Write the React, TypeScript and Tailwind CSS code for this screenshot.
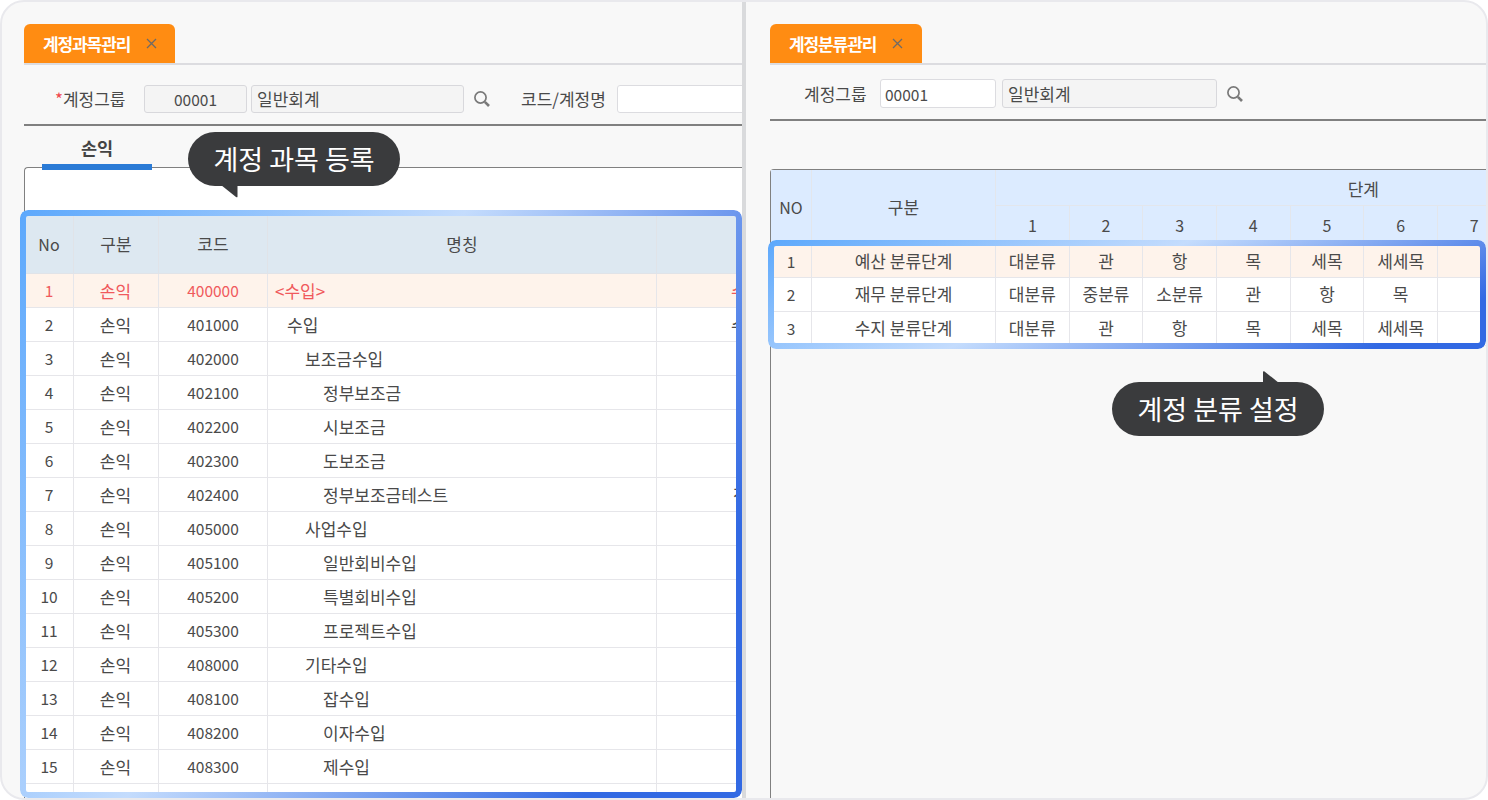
const font = "font-['Noto_Sans_CJK_KR','Noto_Sans',sans-serif]";

const rows: [number, string, string, number, string, string][] = [
  [1, "손익", "400000", 275, "<수입>", "수"],
  [2, "손익", "401000", 287, "수입", "수"],
  [3, "손익", "402000", 305, "보조금수입", ""],
  [4, "손익", "402100", 323, "정부보조금", ""],
  [5, "손익", "402200", 323, "시보조금", ""],
  [6, "손익", "402300", 323, "도보조금", ""],
  [7, "손익", "402400", 323, "정부보조금테스트", "정"],
  [8, "손익", "405000", 305, "사업수입", ""],
  [9, "손익", "405100", 323, "일반회비수입", ""],
  [10, "손익", "405200", 323, "특별회비수입", ""],
  [11, "손익", "405300", 323, "프로젝트수입", ""],
  [12, "손익", "408000", 305, "기타수입", ""],
  [13, "손익", "408100", 323, "잡수입", ""],
  [14, "손익", "408200", 323, "이자수입", ""],
  [15, "손익", "408300", 323, "제수입", ""],
];

const steps = [
  ["예산 분류단계", "대분류", "관", "항", "목", "세목", "세세목"],
  ["재무 분류단계", "대분류", "중분류", "소분류", "관", "항", "목"],
  ["수지 분류단계", "대분류", "관", "항", "목", "세목", "세세목"],
];

function Tab({ label, wide }: { label: string; wide?: boolean }) {
  return (
    <div className={`flex h-[39px] items-center rounded-t-md bg-[#ff8c12] pl-[19px] text-[17px] font-bold tracking-[-1.1px] text-white ${wide ? "w-[152px]" : "w-[151px]"}`}>
      <span>{label}</span>
      <svg className="ml-[16px]" width="11" height="11" viewBox="0 0 11 11">
        <path d="M1 1 10 10M10 1 1 10" stroke="#6f6a66" strokeWidth="1.3" fill="none" />
      </svg>
    </div>
  );
}

function SearchIcon() {
  return (
    <svg width="18" height="18" viewBox="0 0 18 18" fill="none">
      <circle cx="7.5" cy="7.5" r="5.6" stroke="#7a7a7a" strokeWidth="1.7" />
      <path d="M11.8 11.8 16 16" stroke="#7a7a7a" strokeWidth="2.6" />
    </svg>
  );
}

function Bubble({ text, className, children }: { text: string; className: string; children: React.ReactNode }) {
  return (
    <div className={`absolute flex h-[54px] w-[212px] items-center justify-center rounded-[27px] bg-[#3a3b3d] text-[27px] text-white ${className}`}>
      {text}
      {children}
    </div>
  );
}

function Frame({ className }: { className: string }) {
  return (
    <div
      className={`pointer-events-none absolute rounded-[8px] border-[6px] border-transparent [mask-image:linear-gradient(#000_0_0),linear-gradient(#000_0_0)] [mask-clip:padding-box,border-box] [mask-composite:exclude] ${className}`}
    />
  );
}

export default function App() {
  return (
    <div className={`relative h-[800px] w-[1488px] overflow-hidden bg-white text-[17px] text-[#4a4a4a] ${font}`}>
      <div className="flex h-full w-full overflow-hidden rounded-[24px] border-2 border-[#e9e9ed] bg-[#f8f8f8]">
        {/* left panel */}
        <div className="flex h-full w-[740px] shrink-0 flex-col overflow-hidden pl-[22px] pt-[22px]">
          <div className="border-b-2 border-[#dcdce0]">
            <Tab label="계정과목관리" />
          </div>
          <div className="mt-[20px] flex h-[28px] items-center">
            <span className="ml-[31px] w-[89px] shrink-0 whitespace-nowrap">
              <span className="text-[#f0484e]">*</span>계정그룹
            </span>
            <div className="flex h-[28px] w-[103px] shrink-0 items-center justify-center rounded-[3px] border border-[#d8d8dc] bg-[#f4f4f4] pt-[2px] text-[15.5px]">00001</div>
            <div className="ml-[4px] flex h-[28px] w-[213px] shrink-0 items-center rounded-[3px] border border-[#d8d8dc] bg-[#f4f4f4] pl-[5px]">일반회계</div>
            <div className="ml-[9px] shrink-0"><SearchIcon /></div>
            <span className="ml-[30px] shrink-0 whitespace-nowrap">코드/계정명</span>
            <div className="ml-[11px] h-[28px] w-[140px] shrink-0 rounded-[3px] border border-[#dcdce0] bg-white" />
          </div>
          <div className="mt-[11px] h-[2px] bg-[#808080]" />
          <div className="relative z-10 ml-[18px] flex h-[44px] w-[110px] items-center justify-center border-b-[6px] border-[#2b7bd6] pt-[6px] text-[17.5px] font-bold text-[#444]">
            손익
          </div>
          <div className="-mt-[3px] min-h-0 flex-1 rounded-tl-[4px] border-l border-t border-[#808080] bg-white pt-[48px]">
            <div className="grid h-[58px] grid-cols-[49px_85px_109px_389px_120px] border-b border-[#e0e3e8] bg-[#dde8f1]">
              {["No", "구분", "코드", "명칭", ""].map((h, i) => (
                <div key={i} className={`flex items-center justify-center border-r border-[#e0e3e8] pb-[2px] ${i === 0 ? "text-[16px]" : ""}`}>{h}</div>
              ))}
            </div>
            {rows.map(([n, kind, code, x, name, extra]) => {
              const red = n === 1;
              return (
                <div
                  key={n}
                  className={`grid h-[34px] grid-cols-[49px_85px_109px_389px_120px] border-b border-[#e6e6ea] ${red ? "bg-[#fef3eb] text-[#f0595c]" : ""}`}
                >
                  <div className="flex items-center justify-center border-r border-[#e6e6ea] pt-[1px] text-[15.5px]">{n}</div>
                  <div className="flex items-center justify-center border-r border-[#e6e6ea] pr-[1px]">{kind}</div>
                  <div className="flex items-center justify-center border-r border-[#e6e6ea] pt-[1px] text-[15.5px]">{code}</div>
                  <div className="flex items-center border-r border-[#e6e6ea]" style={{ paddingLeft: x - 268 }}>{name}</div>
                  <div className={`flex items-center whitespace-nowrap ${n === 7 ? "pl-[76px]" : "pl-[74px]"}`}>{extra}</div>
                </div>
              );
            })}
            <div className="grid h-[34px] grid-cols-[49px_85px_109px_389px_120px]">
              <div className="border-r border-[#e6e6ea]" />
              <div className="border-r border-[#e6e6ea]" />
              <div className="border-r border-[#e6e6ea]" />
              <div className="border-r border-[#e6e6ea]" />
              <div />
            </div>
          </div>
        </div>

        <div className="h-full w-[4px] shrink-0 bg-[#d9dadc]" />

        {/* right panel */}
        <div className="flex h-full min-w-0 flex-1 flex-col overflow-hidden pl-[24px] pt-[22px]">
          <div className="border-b-2 border-[#dcdce0]">
            <Tab label="계정분류관리" wide />
          </div>
          <div className="mt-[14px] flex h-[29px] items-center">
            <span className="ml-[34px] w-[76px] shrink-0 whitespace-nowrap">계정그룹</span>
            <div className="flex h-[29px] w-[116px] shrink-0 items-center rounded-[3px] border border-[#dcdce0] bg-white pl-[4px] pt-[3px] text-[15.5px]">00001</div>
            <div className="ml-[6px] flex h-[29px] w-[215px] shrink-0 items-center rounded-[3px] border border-[#d8d8dc] bg-[#f4f4f4] pl-[5px] pt-[1px]">일반회계</div>
            <div className="ml-[9px] shrink-0"><SearchIcon /></div>
          </div>
          <div className="mt-[11px] h-[2px] bg-[#808080]" />
          <div className="mt-[48px] min-h-0 flex-1 rounded-tl-[4px] border-l border-t border-[#808080]">
            <div className="grid w-[1000px] grid-cols-[41px_184px_repeat(10,73.67px)] grid-rows-[36px_40px] bg-[#dcebff]">
              <div className="row-span-2 flex items-center justify-center border-r border-[#e3e6ec] pb-[2px] text-[16px]">NO</div>
              <div className="row-span-2 flex items-center justify-center border-r border-[#e3e6ec] pb-[2px]">구분</div>
              <div className="col-span-10 flex items-center justify-center border-b border-[#e3e6ec] pr-[2px] pt-[2px]">단계</div>
              {[1, 2, 3, 4, 5, 6, 7, 8, 9, 10].map((n) => (
                <div key={n} className="flex items-center justify-center border-r border-[#e3e6ec] pb-[2px] text-[16px]">{n}</div>
              ))}
            </div>
            {steps.map((row, r) => (
              <div
                key={r}
                className={`grid w-[1000px] grid-cols-[41px_184px_repeat(10,73.67px)] border-b border-[#e6e6ea] ${r === 0 ? "h-[32px] bg-[#fef3eb]" : "h-[34px] bg-white"}`}
              >
                <div className="flex items-center justify-center border-r border-[#e6e6ea] text-[15.5px]">{r + 1}</div>
                {row.map((c, i) => (
                  <div key={i} className="flex items-center justify-center border-r border-[#e6e6ea] pb-[2px]">{c}</div>
                ))}
                <div className="border-r border-[#e6e6ea]" />
              </div>
            ))}
          </div>
        </div>
      </div>

      <Frame className="left-[20px] top-[210px] h-[588px] w-[722px] [background:linear-gradient(120deg,#5ca8fc_0%,#c4dcfd_42%,#3269e3_85%)_border-box]" />
      <Frame className="left-[768px] top-[240px] h-[109px] w-[718px] [background:linear-gradient(156deg,#5ca8fc_0%,#c4dcfd_44%,#3269e3_88%)_border-box]" />

      <Bubble text="계정 과목 등록" className="left-[188px] top-[132px]">
        <svg className="absolute left-[33px] top-[53px]" width="17" height="13" viewBox="0 0 17 13">
          <path d="M0 0H16.5V11.5C16.5 12.5 15.8 12.5 15 12Z" fill="#3a3b3d" />
        </svg>
      </Bubble>
      <Bubble text="계정 분류 설정" className="left-[1112px] top-[382px]">
        <svg className="absolute left-[151px] -top-[11px]" width="17" height="12" viewBox="0 0 17 12">
          <path d="M0 12V1C0 0 .8 0 1.5.5L16 12Z" fill="#3a3b3d" />
        </svg>
      </Bubble>
    </div>
  );
}
